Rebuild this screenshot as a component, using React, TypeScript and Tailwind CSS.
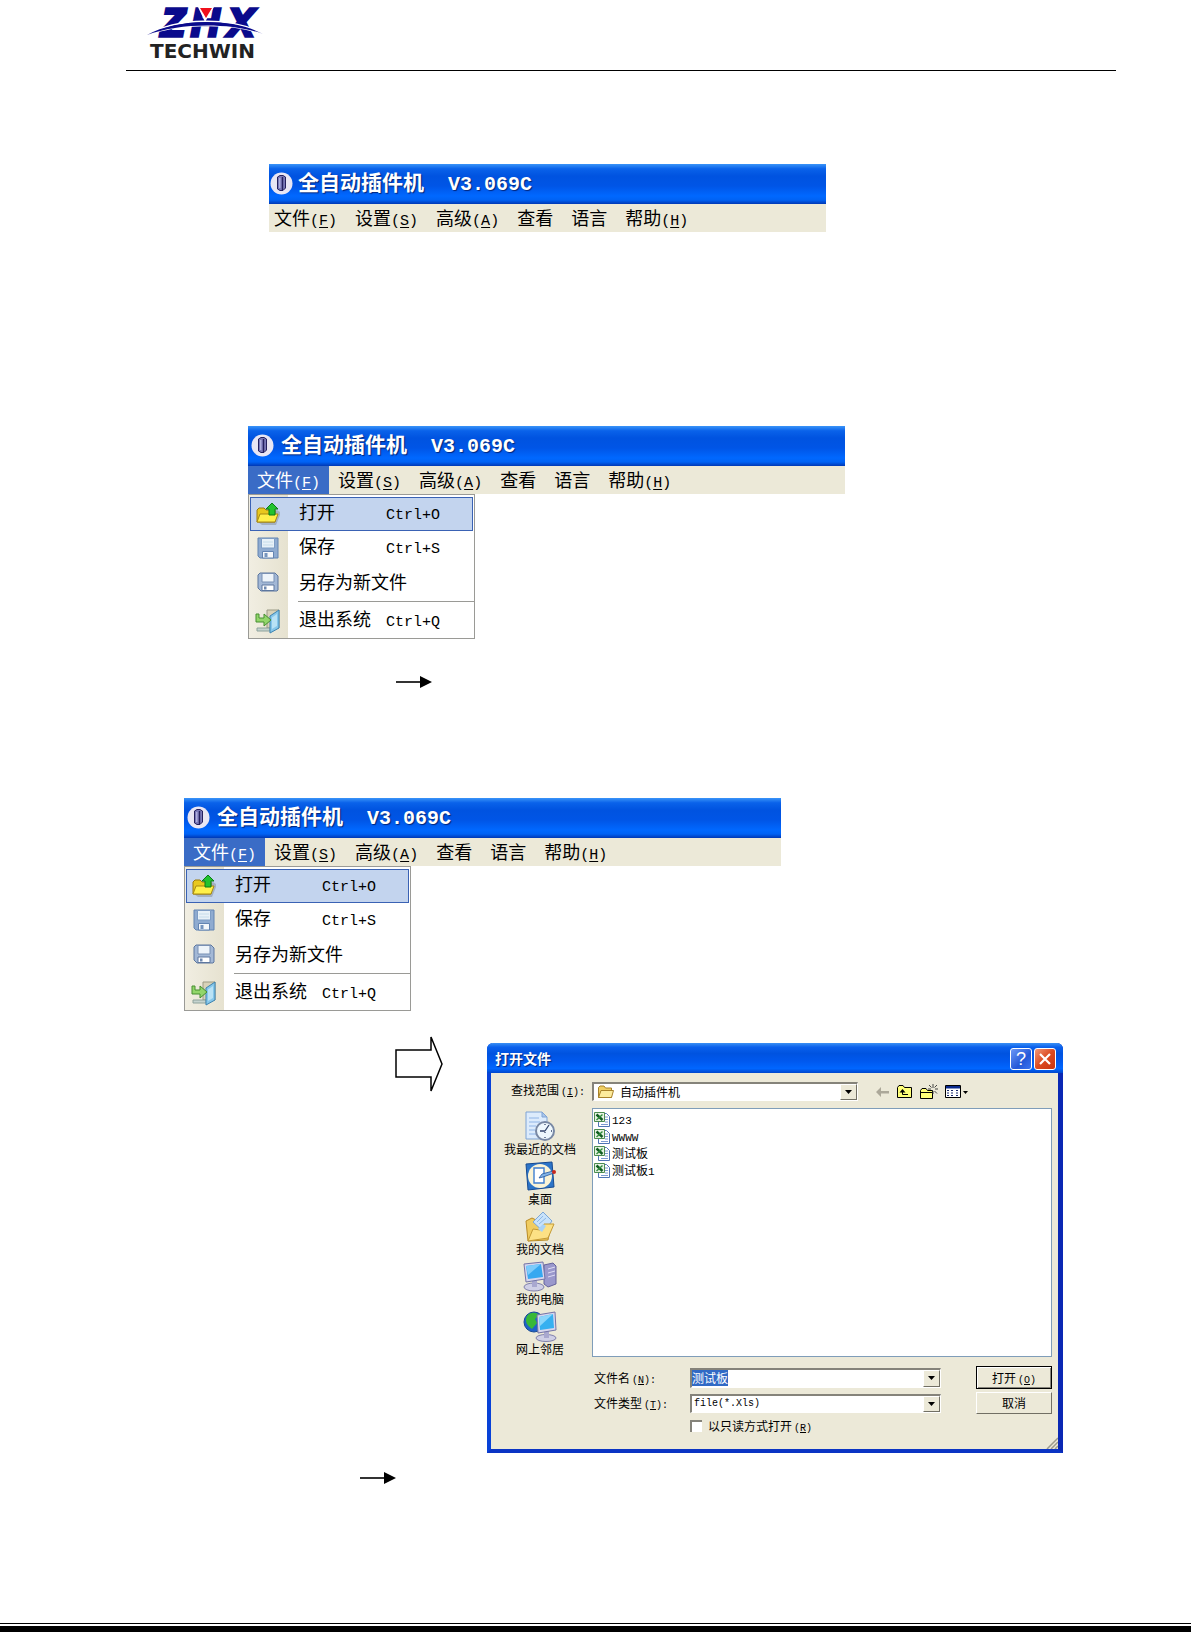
import { useEffect, useRef } from 'react';
import type { ReactNode } from 'react';

/* Logo */
const Logo = () => (
  <svg width="120" height="62" viewBox="0 0 120 62" role="img" aria-label="ZHX Techwin">
    <g
      fill="#0a0a8c"
      stroke="#0a0a8c"
      strokeWidth="3.4"
      fontFamily="'Liberation Sans', sans-serif"
      fontWeight="700"
      fontStyle="italic"
      fontSize="39"
    >
      <text x="15" y="36">Z</text>
      <text x="45" y="36">H</text>
      <text x="82" y="36">X</text>
    </g>
    {/* Red wedge between the stems of the H */}
    <path d="M52 7H68L59 22Z" fill="#fff" />
    <path d="M54 8H66L60 18Z" fill="#f0101c" />
    <path d="M1 35C30 18 85 16 117 34C85 22 32 23 1 35Z" fill="#0a0a8c" stroke="#fff" strokeWidth="1.6" />
    <path d="M1 35C30 19 85 17 117 34C85 22 32 23 1 35Z" fill="#0a0a8c" />
    <text x="4" y="58" fill="#222" fontFamily="'DejaVu Sans', sans-serif" fontWeight="700" fontSize="20">
      TECHWIN
    </text>
  </svg>
);

/* Menu icons */
const AppIcon = () => (
  <svg width="23" height="23" viewBox="0 0 23 23" aria-hidden="true">
    <circle cx="11.5" cy="11.5" r="11" fill="#e9e6f4" />
    <path d="M7.5 5L10 3.5H13L15.5 5V16L13 18.5H10L7.5 17Z" fill="#7a78b8" stroke="#25205e" />
    <path d="M12.5 5V18" stroke="#25205e" strokeWidth="1.4" />
    <path d="M9.8 6V16" stroke="#c8c6ee" />
  </svg>
);

const OpenIcon = () => (
  <svg width="26" height="24" viewBox="0 0 26 24" aria-hidden="true">
    <path d="M3 20L7 23H21L25 13V10L22 8Z" fill="#8d97a5" opacity=".6" />
    <path d="M2 20V8L4 6H9L11 8H20V20Z" fill="#e8c81e" stroke="#9a7a10" />
    <path d="M2 20L5 12H23L20 20Z" fill="#fff04a" stroke="#a88a12" />
    <path d="M17 1L23 7H20V13H14V7H11Z" fill="#22c32e" stroke="#0c7a16" />
  </svg>
);

const SaveIcon = () => (
  <svg width="22" height="22" viewBox="0 0 22 22" aria-hidden="true">
    <path d="M1 1H21V21H3L1 19Z" fill="#8fabd0" stroke="#6384b2" />
    <path d="M4.5 1.5H17.5V11H4.5Z" fill="#e8f1f8" stroke="#7d9cc4" />
    <path d="M5.5 14.5H16.5V21H5.5Z" fill="#f4f7fa" stroke="#6384b2" />
    <path d="M7.5 16H10.5V20H7.5Z" fill="#7695be" />
    <path d="M6 5H16M6 8H16" stroke="#c6dcea" />
  </svg>
);

const SaveAsIcon = () => (
  <svg width="22" height="20" viewBox="0 0 22 20" aria-hidden="true">
    <path d="M3 1H18L21 4V18L20 19H4L1 16V3Z" fill="#a3b8d6" stroke="#5d779f" />
    <path d="M5 1.5H17V10H5Z" fill="#eef4fa" stroke="#7990b4" />
    <path d="M5 13H17V18.5H5Z" fill="#fff" stroke="#5d779f" />
    <path d="M7 14.5H9.5V17.5H7Z" fill="#6f89b0" />
  </svg>
);

const ExitIcon = () => (
  <svg width="26" height="26" viewBox="0 0 26 26" aria-hidden="true">
    <path d="M12 2H24V20H12Z" fill="#d8d2b8" stroke="#9b9a84" />
    <path d="M2 20H15V23H2Z" fill="#c5d3cf" stroke="#8ea29b" />
    <path d="M15 8L24 2V20L15 25Z" fill="#86c7ea" stroke="#3d83b0" />
    <path d="M17 9.5L22 6V18L17 21Z" fill="#b9e2f5" />
    <path d="M1 6H4V10H9V6L16 12L9 18V14H1Z" fill="#92d66a" stroke="#468f31" />
  </svg>
);

type MenuItem = { label: string; hotkey?: string };

const menus: MenuItem[] = [
  { label: '文件', hotkey: 'F' },
  { label: '设置', hotkey: 'S' },
  { label: '高级', hotkey: 'A' },
  { label: '查看' },
  { label: '语言' },
  { label: '帮助', hotkey: 'H' },
];

const fileActions = [
  { label: '打开', shortcut: 'Ctrl+O', icon: <OpenIcon /> },
  { label: '保存', shortcut: 'Ctrl+S', icon: <SaveIcon /> },
  { label: '另存为新文件', shortcut: '', icon: <SaveAsIcon /> },
  { label: '退出系统', shortcut: 'Ctrl+Q', icon: <ExitIcon /> },
];

const Hotkey = ({ letter }: { letter: string }) => (
  <span className="font-['Liberation_Mono',monospace] text-[15px] leading-none">
    (<u className="underline-offset-2">{letter}</u>)
  </span>
);

const AppWindow = ({ open = false }: { open?: boolean }) => (
  <div className="w-full">
    <div
      className={`flex h-10 items-center bg-[linear-gradient(#3a94f8,#0a62ea_12%,#0053e0_30%,#0055e6_55%,#0068ff_80%,#0062f4_90%,#0038b4)] pb-0.5 font-bold text-white [text-shadow:1px_1px_1px_#00257a] ${
        open ? 'gap-[7px] pl-[3px]' : 'gap-[5px] pl-px'
      }`}
    >
      <AppIcon />
      <h2 className="flex items-baseline gap-6 text-[21px] leading-6 whitespace-nowrap">
        全自动插件机
        <span className="font-['Liberation_Mono',monospace] text-[20px]">V3.069C</span>
      </h2>
    </div>
    <nav className="flex h-7 bg-[#ece9d8] text-[18px] leading-6">
      {menus.map((menu, i) => (
        <button
          key={menu.label}
          type="button"
          className={`pr-[9px] pb-0.5 whitespace-nowrap ${i === 0 && !open ? 'pl-[5px]' : 'pl-[9px]'} ${
            i === 0 && open ? 'bg-[#3a6cc6] text-white' : 'text-black'
          }`}
        >
          {menu.label}
          {menu.hotkey && <Hotkey letter={menu.hotkey} />}
        </button>
      ))}
    </nav>
    {open && (
      <ul className="w-[227px] border border-[#9a9a96] bg-[linear-gradient(90deg,#f1eee2,#e6e2d0_39px,#fff_39px)] px-px pt-0.5 text-[18px] leading-6">
        {fileActions.map((action, i) => (
          <li key={action.label} className={i === 3 ? 'pt-0.5' : ''}>
            {i === 3 && <hr className="-mr-px mb-0.5 ml-12 border-[#9a9a96]" />}
            <button
              type="button"
              className={`flex w-full items-center gap-[14px] text-left whitespace-nowrap ${
                i === 0
                  ? 'h-[34px] border border-[#3a62b4] bg-[#c3d4ee]'
                  : 'h-[34px] border border-transparent'
              }`}
            >
              <span className="flex w-[34px] justify-center">{action.icon}</span>
              <span className="grid flex-1 grid-cols-[87px_1fr] items-baseline pb-0.5">
                <span>{action.label}</span>
                <span className="font-['Liberation_Mono',monospace] text-[15px]">{action.shortcut}</span>
              </span>
            </button>
          </li>
        ))}
      </ul>
    )}
  </div>
);

const Arrow = () => (
  <svg width="36" height="12" viewBox="0 0 36 12" aria-hidden="true">
    <path d="M0 6H26" stroke="#000" strokeWidth="1.6" />
    <path d="M24 0L36 6L24 12Z" />
  </svg>
);

/* Places shown down the left side of the dialog */
const RecentIcon = () => (
  <svg width="32" height="30" viewBox="0 0 32 30" aria-hidden="true">
    <path d="M2 1H18L23 6V28H2Z" fill="#dcebfc" stroke="#7fa3d4" />
    <path d="M18 1V6H23Z" fill="#a9c6ec" stroke="#7fa3d4" />
    <path d="M5 7H15M5 11H16M5 15H12M5 19H11M5 23H12" stroke="#8fb4e6" />
    <circle cx="21" cy="20" r="9" fill="#eef7fd" stroke="#7888a4" strokeWidth="2" />
    <path d="M21 20L25 14M21 20H16M21 22V21M21 13V14M28 20H27M21 27V26" stroke="#34466c" strokeWidth="1.3" />
  </svg>
);

const DesktopIcon = () => (
  <svg width="34" height="30" viewBox="0 0 34 30" aria-hidden="true">
    <path d="M3 3L29 1L31 26L5 29Z" fill="#2c74c8" stroke="#174a90" />
    <ellipse cx="17" cy="15" rx="12" ry="12" fill="#faf3d6" />
    <path d="M11 7H21V22H11Z" fill="#fff" stroke="#3f7fd0" strokeWidth="1.4" />
    <path d="M16 17L19 13L30 10L31 12L20 16Z" fill="#82b4e8" stroke="#23569c" strokeWidth=".8" />
    <circle cx="31" cy="11" r="2" fill="#c8281e" />
  </svg>
);

const DocumentsIcon = () => (
  <svg width="32" height="31" viewBox="0 0 32 31" aria-hidden="true">
    <path d="M2 10L8 7L12 9L27 14L24 29L4 30Z" fill="#f0cc60" stroke="#b98b26" />
    <path d="M9 11L19 1L28 10L20 21Z" fill="#c8e2fa" stroke="#7ba6d6" />
    <path d="M13 11L19 5M15 13L22 7" stroke="#8bb7e6" />
    <path d="M4 30L9 18L16 19L20 13L30 13L24 27Z" fill="#fce185" stroke="#c39a35" />
    <path d="M14 18L19 13L22 15L18 21Z" fill="#a9d2f6" />
  </svg>
);

const ComputerIcon = () => (
  <svg width="34" height="31" viewBox="0 0 34 31" aria-hidden="true">
    <path d="M21 4L30 2L33 5V23L25 26L21 23Z" fill="#9a98cc" stroke="#66649c" />
    <path d="M25 8L32 6M25 12L32 10M25 16L32 14" stroke="#dedcf4" />
    <ellipse cx="11" cy="26" rx="10" ry="4" fill="#cfcfe6" stroke="#8080ac" />
    <path d="M9 18H14V26H9Z" fill="#a9a8cf" />
    <path d="M1 3L20 1L22 18L3 21Z" fill="#d6d6ee" stroke="#7474a6" />
    <path d="M3 5L18 3L20 16L5 18Z" fill="#36a8f0" />
    <path d="M3 5L18 3L5 14Z" fill="#7ccbfa" />
  </svg>
);

const NetworkIcon = () => (
  <svg width="34" height="31" viewBox="0 0 34 31" aria-hidden="true">
    <circle cx="11" cy="11" r="10" fill="#1f62c8" stroke="#174a94" />
    <path d="M4 5C7 1 13 1 16 4L12 8L14 12L9 18C5 15 1 11 4 5Z" fill="#38b838" />
    <ellipse cx="23" cy="27" rx="10" ry="3.5" fill="#cfcfe6" stroke="#8080ac" />
    <path d="M21 20H26V27H21Z" fill="#a9a8cf" />
    <path d="M14 4L32 1L33 19L15 22Z" fill="#d6d6ee" stroke="#7474a6" />
    <path d="M16 6L30 3L31 17L17 19Z" fill="#36b0f0" />
    <path d="M16 6L30 3L17 15Z" fill="#8cd6fa" />
  </svg>
);

const places = [
  { label: '我最近的文档', icon: <RecentIcon /> },
  { label: '桌面', icon: <DesktopIcon /> },
  { label: '我的文档', icon: <DocumentsIcon /> },
  { label: '我的电脑', icon: <ComputerIcon /> },
  { label: '网上邻居', icon: <NetworkIcon /> },
];

const files = [
  { name: '', suffix: '123' },
  { name: '', suffix: 'WWWW' },
  { name: '测试板', suffix: '' },
  { name: '测试板', suffix: '1' },
];

const ExcelIcon = () => (
  <svg width="16" height="16" viewBox="0 0 16 16" aria-hidden="true">
    <path d="M5.5 2.5H12.5L15.5 5.5V15.5H4.5V12Z" fill="#fff" stroke="#4f74b4" />
    <path d="M11 6H14M11 8.5H14M11 11H14M7 13.5H14" stroke="#7c9ad0" />
    <path d="M.5 1.5H10.5V10.5H.5Z" fill="#e6f2e2" stroke="#4c8c50" />
    <path d="M2.5 3.5L8.5 9" stroke="#0f5c20" strokeWidth="2.4" />
    <path d="M8.5 3.5L2.5 9" stroke="#2f8c3c" strokeWidth="1.4" />
  </svg>
);

const FolderIcon = () => (
  <svg width="16" height="14" viewBox="0 0 16 14" aria-hidden="true">
    <path d="M.5 12.5V2.5L2 1H6L7.5 3H13.5V12.5Z" fill="#f0cf62" stroke="#a8822a" />
    <path d="M.5 12.5L3 5.5H15.5L13.5 12.5Z" fill="#fdeb9c" stroke="#a8822a" />
  </svg>
);

/* Dialog toolbar */
const BackIcon = () => (
  <svg width="14" height="10" viewBox="0 0 14 10" aria-hidden="true">
    <path d="M0 5L5 0V4H13V6.5H5V10Z" fill="#aca899" />
  </svg>
);

const UpIcon = () => (
  <svg width="16" height="13" viewBox="0 0 16 13" aria-hidden="true">
    <path d="M.5 12.5V2.5L2 .5H6L7.5 2.5H14.5V12.5Z" fill="#ffff78" stroke="#000" />
    <path d="M5.5 5V9.5H11" stroke="#000" fill="none" />
    <path d="M2.5 7.5L5.5 4L8.5 7.5Z" />
  </svg>
);

const NewFolderIcon = () => (
  <svg width="18" height="16" viewBox="0 0 18 16" aria-hidden="true">
    <path d="M.5 14.5V6.5L2 4.5H6L7.5 6.5H12.5V14.5Z" fill="#ffff78" stroke="#000" />
    <path d="M.5 8.5H12" stroke="#000" />
    <path
      d="M13 0V4M13 7V10M8 5H11M15 5H18M9 1L11.5 3.5M17 1L14.5 3.5M14.5 7L17 9.5"
      stroke="#333"
      strokeWidth=".9"
    />
  </svg>
);

const ViewIcon = () => (
  <svg width="24" height="14" viewBox="0 0 24 14" aria-hidden="true">
    <path d="M.5 .5H15.5V12.5H.5Z" fill="#fff" stroke="#000" />
    <path d="M1 1H15V3.5H1Z" fill="#0a2a8c" />
    <path d="M2 5.5H4M2 8H4M2 10.5H4M6 5.5H8M6 8H8M6 10.5H8M11 5.5H13M11 8H13M11 10.5H13" stroke="#1a2a6c" />
    <path d="M18 6H23L20.5 9Z" />
  </svg>
);

const tools = [
  { label: '后退', icon: <BackIcon /> },
  { label: '向上一级', icon: <UpIcon /> },
  { label: '新建文件夹', icon: <NewFolderIcon /> },
  { label: '查看方式', icon: <ViewIcon /> },
];

const Small = ({ children }: { children: ReactNode }) => (
  <span className="ml-0.5 font-['Liberation_Mono',monospace] text-[10px] leading-none">{children}</span>
);

const DropArrow = () => (
  <span
    aria-hidden="true"
    className="pointer-events-none flex w-[17px] shrink-0 items-center justify-center border border-t-white border-r-[#716f64] border-b-[#716f64] border-l-white bg-[#ece9d8]"
  >
    <svg width="7" height="4" viewBox="0 0 7 4">
      <path d="M0 0H7L3.5 4Z" />
    </svg>
  </span>
);

const field =
  'flex border-t-2 border-r border-b border-l-2 border-t-[#85837a] border-r-white border-b-white border-l-[#85837a] bg-white';

const OpenDialog = () => {
  const nameRef = useRef<HTMLInputElement>(null);

  useEffect(() => {
    nameRef.current?.focus({ preventScroll: true });
    nameRef.current?.select();
  }, []);

  return (
    <div
      role="dialog"
      aria-labelledby="dialog-title"
      className="relative w-full max-w-[576px] rounded-t-md border-r-[5px] border-b-4 border-l-4 border-r-[#0a28b4] border-b-[#0a34c4] border-l-[#0842d8] bg-[#ece9d8] text-[12px] leading-4"
    >
      <div className="-mr-[5px] -ml-1 flex h-[30px] items-center justify-between rounded-t-md bg-[linear-gradient(#3a90f4,#0a60ec_14%,#0053e0_35%,#0058ee_60%,#0066ff_85%,#0046cc)] pr-[7px] pl-2">
        <h2 id="dialog-title" className="text-[14px] font-bold text-white [text-shadow:1px_1px_1px_#00257a]">
          打开文件
        </h2>
        <div className="flex gap-0.5 pt-0.5">
          <button
            type="button"
            aria-label="帮助"
            className="flex size-[22px] items-center justify-center rounded-[3px] border border-white bg-[linear-gradient(135deg,#6c98f6,#2458d8_60%,#3c74f0)] font-['Liberation_Sans',sans-serif] text-[18px] text-white"
          >
            ?
          </button>
          <button
            type="button"
            aria-label="关闭"
            className="flex size-[22px] items-center justify-center rounded-[3px] border border-white bg-[linear-gradient(135deg,#f09878,#dc4a20_50%,#c83410)]"
          >
            <svg width="12" height="12" viewBox="0 0 12 12" aria-hidden="true">
              <path d="M1 1L11 11M11 1L1 11" stroke="#fff" strokeWidth="2.2" />
            </svg>
          </button>
        </div>
      </div>

      <form
        className="grid grid-cols-[101px_1fr] pt-[9px] pr-1.5 pb-[15px]"
        onSubmit={(e) => e.preventDefault()}
      >
        <label htmlFor="look-in" className="h-[19px] pl-5 whitespace-nowrap">
          查找范围<Small>(<u>I</u>):</Small>
        </label>
        <div className="flex h-[19px] items-center">
          <div className={`${field} h-full w-[266px] items-stretch`}>
            <span className="flex items-center pl-1">
              <FolderIcon />
            </span>
            <select id="look-in" className="min-w-0 flex-1 appearance-none pl-1.5 outline-none">
              <option>自动插件机</option>
            </select>
            <DropArrow />
          </div>
          <div className="ml-[18px] flex items-center gap-[7px]">
            {tools.map((tool) => (
              <button key={tool.label} type="button" aria-label={tool.label}>
                {tool.icon}
              </button>
            ))}
          </div>
        </div>

        {/* Places */}
        <ul className="mt-2.5 flex w-[98px] flex-col gap-1">
          {places.map((place) => (
            <li key={place.label}>
              <button type="button" className="flex w-full flex-col items-center">
                <span className="flex h-[30px] items-center">{place.icon}</span>
                {place.label}
              </button>
            </li>
          ))}
        </ul>

        {/* Files */}
        <ul className="mt-[7px] h-[249px] border border-[#7f9db9] bg-white pt-px pl-px">
          {files.map((file) => (
            <li key={file.name + file.suffix}>
              <button type="button" className="flex h-[17px] items-center gap-0.5">
                <ExcelIcon />
                <span>
                  {file.name}
                  <span className="font-['Liberation_Mono',monospace] text-[11px] leading-none">{file.suffix}</span>
                </span>
              </button>
            </li>
          ))}
        </ul>

        <div className="col-start-2 mt-[9px]">
          <div className="flex h-[23px] items-center">
            <label htmlFor="file-name" className="w-[98px] pl-0.5">
              文件名<Small>(<u>N</u>):</Small>
            </label>
            <div className={`${field} h-5 flex-1`}>
              <input
                id="file-name"
                ref={nameRef}
                defaultValue="测试板"
                className="min-w-0 flex-1 outline-none selection:bg-[#316ac5] selection:text-white"
              />
              <DropArrow />
            </div>
            <button
              type="submit"
              className="ml-[35px] h-[23px] w-[76px] border border-black shadow-[inset_1px_1px_0_#fff,inset_-1px_-1px_0_#85837a]"
            >
              打开<Small>(<u>O</u>)</Small>
            </button>
          </div>
          <div className="mt-[3px] flex h-[22px] items-center">
            <label htmlFor="file-type" className="w-[98px] pl-0.5">
              文件类型<Small>(<u>T</u>):</Small>
            </label>
            <div className={`${field} h-[19px] flex-1`}>
              <select
                id="file-type"
                className="min-w-0 flex-1 appearance-none pl-0.5 font-['Liberation_Mono',monospace] text-[10px] outline-none"
              >
                <option>file(*.Xls)</option>
              </select>
              <DropArrow />
            </div>
            <button
              type="button"
              className="ml-[35px] h-[22px] w-[76px] border border-t-white border-r-[#716f64] border-b-[#716f64] border-l-white"
            >
              取消
            </button>
          </div>
          <div className="mt-1 ml-[98px] flex h-4 items-center gap-1.5">
            <input
              id="read-only"
              type="checkbox"
              className="size-3 appearance-none border-t-2 border-l-2 border-[#85837a] bg-white"
            />
            <label htmlFor="read-only">
              以只读方式打开<Small>(<u>R</u>)</Small>
            </label>
          </div>
        </div>
      </form>

      {/* Resize grip */}
      <svg className="absolute right-0 bottom-0" width="12" height="12" viewBox="0 0 12 12" aria-hidden="true">
        <path d="M1 12L12 1M5 12L12 5M9 12L12 9" stroke="#9c9a8c" strokeWidth="1.5" />
      </svg>
    </div>
  );
};

const App = () => {
  return (
    <div className="flex min-h-screen flex-col bg-white font-['Noto_Sans_CJK_SC',sans-serif] text-black">
      <header className="mr-[75px] ml-[126px] border-b border-black pb-2 pl-5">
        <Logo />
      </header>

      <main>
        <section className="mt-[93px] ml-[269px] max-w-[557px]">
          <AppWindow />
        </section>

        <section className="mt-[194px] ml-[248px] max-w-[597px]">
          <AppWindow open />
        </section>
        <div className="mt-[37px] ml-[396px]">
          <Arrow />
        </div>

        <section className="mt-[110px] ml-[184px] max-w-[597px]">
          <AppWindow open />
        </section>
        <section className="mt-6 mr-5 ml-[395px] flex items-start gap-11">
          <svg className="shrink-0" width="48" height="58" viewBox="0 0 48 58" aria-hidden="true">
            <path d="M1 15H36V2L47 29L36 56V42H1Z" fill="#fff" stroke="#000" strokeWidth="1.5" />
          </svg>
          <div className="mt-2 flex-1">
            <OpenDialog />
          </div>
        </section>
        <div className="mt-[19px] ml-[360px]">
          <Arrow />
        </div>
      </main>

      <footer className="mt-auto h-[9px] border-t border-b-[6px] border-black" />
    </div>
  );
};

export default App;
